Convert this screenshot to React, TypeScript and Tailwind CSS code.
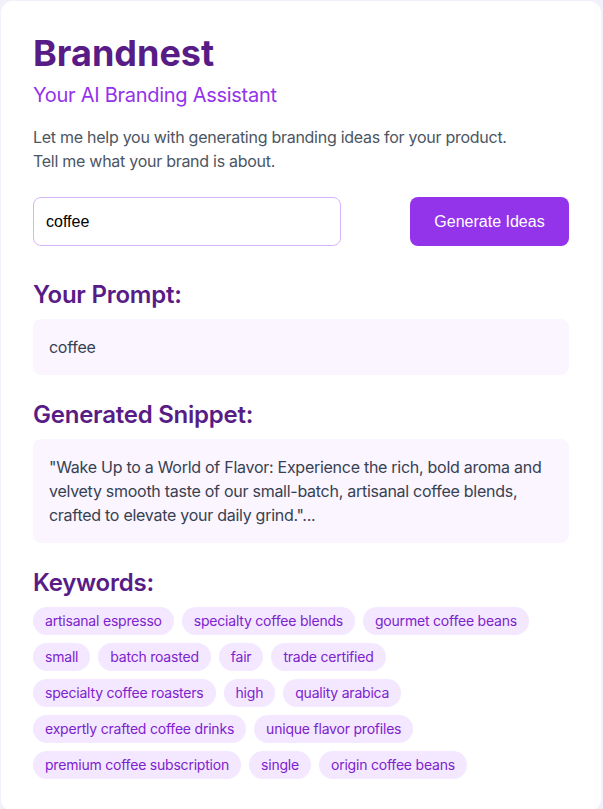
const keywords = [
  "artisanal espresso",
  "specialty coffee blends",
  "gourmet coffee beans",
  "small",
  "batch roasted",
  "fair",
  "trade certified",
  "specialty coffee roasters",
  "high",
  "quality arabica",
  "expertly crafted coffee drinks",
  "unique flavor profiles",
  "premium coffee subscription",
  "single",
  "origin coffee beans",
];

const App = () => {
  return (
    <div className="min-h-[809px] bg-[#f2f0fa] pt-px pl-px font-['Inter',sans-serif] tracking-[-0.017em]">
      <div className="w-[600px] min-h-[808px] bg-white rounded-xl p-8">
        <h1 className="text-4xl font-bold text-[#581c87] tracking-normal mb-2">Brandnest</h1>
        <p className="text-xl text-[#9333ea] mb-4">Your AI Branding Assistant</p>
        <p className="text-base leading-6 text-[#4b5563] mb-6">
          Let me help you with generating branding ideas for your product.
          <br />
          Tell me what your brand is about.
        </p>

        <div className="flex justify-between mb-[33px]">
          <input
            type="text"
            defaultValue="coffee"
            className="w-[308px] h-[49px] px-3 border border-[#d8b4fe] rounded-lg text-base text-black tracking-normal font-['Liberation_Sans',sans-serif] outline-none"
          />
          <button
            type="button"
            className="w-[159px] h-[49px] bg-[#9333ea] text-white rounded-lg text-base tracking-normal font-['Liberation_Sans',sans-serif]"
          >
            Generate Ideas
          </button>
        </div>

        <section className="mb-6">
          <h2 className="text-2xl font-semibold text-[#581c87] tracking-[-0.01em] mb-2">Your Prompt:</h2>
          <div className="bg-[#faf5ff] rounded-lg p-4 text-[#374151] leading-6">coffee</div>
        </section>

        <section className="mb-6">
          <h2 className="text-2xl font-semibold text-[#581c87] tracking-[-0.01em] mb-2">Generated Snippet:</h2>
          <div className="bg-[#faf5ff] rounded-lg p-4 text-[#374151] leading-6">
            "Wake Up to a World of Flavor: Experience the rich, bold aroma and velvety smooth taste of our
            small-batch, artisanal coffee blends, crafted to elevate your daily grind."...
          </div>
        </section>

        <section>
          <h2 className="text-2xl font-semibold text-[#581c87] tracking-[-0.01em] mb-2">Keywords:</h2>
          <div className="flex flex-wrap gap-2">
            {keywords.map((k, i) => (
              <span key={i} className="px-3 py-1 bg-[#f3e8ff] text-[#7e22ce] text-sm tracking-[-0.015em] rounded-full">
                {k}
              </span>
            ))}
          </div>
        </section>
      </div>
    </div>
  );
};

export default App;
